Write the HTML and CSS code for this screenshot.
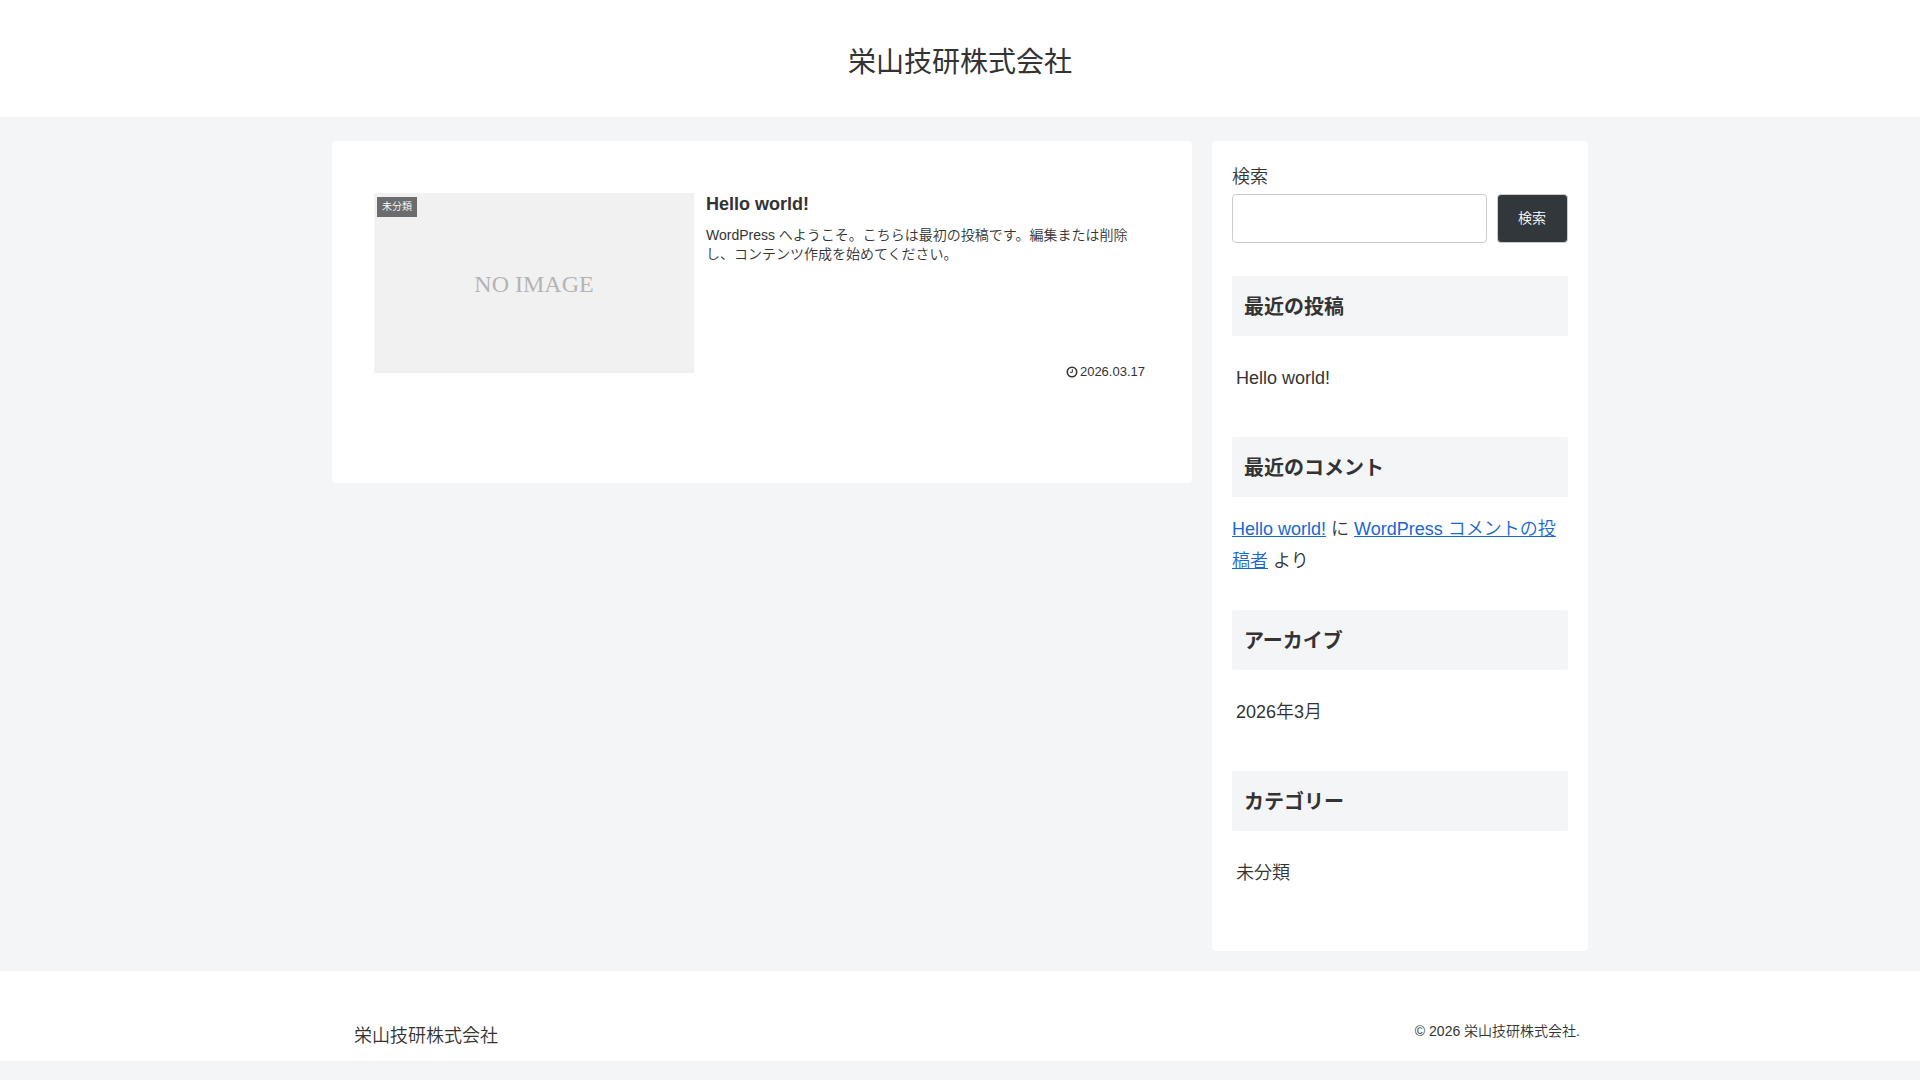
FILE: index.html
```html
<!DOCTYPE html>
<html lang="ja">
<head>
  <meta charset="UTF-8">
  <meta name="viewport" content="width=device-width, initial-scale=1.0">
  <title>栄山技研株式会社</title>
  <link rel="stylesheet" href="styles.css">
</head>
<body>
  <header class="header">
    <h1 class="site-name"><a href="#">栄山技研株式会社</a></h1>
  </header>

  <div class="content">
    <main class="main">
      <article class="entry-card">
        <a class="thumb" href="#">
          <span class="no-image">NO IMAGE</span>
          <span class="cat-label">未分類</span>
        </a>
        <div class="entry-body">
          <h2 class="entry-title"><a href="#">Hello world!</a></h2>
          <p class="entry-snippet">WordPress へようこそ。こちらは最初の投稿です。編集または削除し、コンテンツ作成を始めてください。</p>
          <div class="entry-date">
            <svg class="clock" viewBox="0 0 12 12" aria-hidden="true">
              <circle cx="6" cy="6" r="4.7"></circle>
              <path d="M6.3 3.2v3.2H4"></path>
            </svg>
            <time datetime="2026-03-17">2026.03.17</time>
          </div>
        </div>
      </article>
    </main>

    <aside class="sidebar">
      <form class="widget search" role="search">
        <label for="search-input">検索</label>
        <div class="search-row">
          <input type="search" id="search-input" class="search-input">
          <button type="submit" class="search-button">検索</button>
        </div>
      </form>

      <section class="widget">
        <h2 class="widget-title">最近の投稿</h2>
        <ul class="link-list">
          <li><a href="#">Hello world!</a></li>
        </ul>
      </section>

      <section class="widget">
        <h2 class="widget-title">最近のコメント</h2>
        <p class="comment"><a href="#">Hello world!</a> に <a href="#">WordPress コメントの投稿者</a> より</p>
      </section>

      <section class="widget">
        <h2 class="widget-title">アーカイブ</h2>
        <ul class="link-list">
          <li><a href="#">2026年3月</a></li>
        </ul>
      </section>

      <section class="widget">
        <h2 class="widget-title">カテゴリー</h2>
        <ul class="link-list">
          <li><a href="#">未分類</a></li>
        </ul>
      </section>
    </aside>
  </div>

  <footer class="footer">
    <div class="footer-in">
      <a class="footer-name" href="#">栄山技研株式会社</a>
      <p class="copyright">© 2026 栄山技研株式会社.</p>
    </div>
  </footer>
</body>
</html>
```
FILE: styles.css
```css
* {
  box-sizing: border-box;
}
body {
  margin: 0;
  background-color: #f4f5f7;
  color: #333;
  font-family: "Liberation Sans", Arial, "Noto Sans CJK JP", sans-serif;
  font-size: 18px;
  font-weight: 350;
  line-height: 32px;
}
h1, h2, p, ul {
  margin: 0;
  padding: 0;
}
a {
  color: inherit;
  text-decoration: none;
}

/* header */
.header {
  background-color: #fff;
  padding: 41px 20px 32px;
  text-align: center;
}
.site-name {
  font-size: 28px;
  font-weight: 400;
  line-height: 44px;
}

/* columns */
.content {
  display: flex;
  align-items: flex-start;
  gap: 20px;
  max-width: 1256px;
  margin: 24px auto 20px;
}
.main {
  flex: 1;
  min-width: 0;
  background-color: #fff;
  border-radius: 4px;
  padding: 52px 42px 102px;
}
.sidebar {
  width: 376px;
  background-color: #fff;
  border-radius: 4px;
  padding: 20px 20px 19px;
}

/* entry card */
.entry-card {
  display: flex;
  align-items: flex-start;
  gap: 12px;
}
.thumb {
  position: relative;
  display: flex;
  align-items: center;
  justify-content: center;
  flex: 0 0 320px;
  height: 180px;
  padding-top: 2px;
  background-color: #f1f1f1;
}
.no-image {
  color: #b4b4b4;
  font-family: "Liberation Serif", "Times New Roman", serif;
  font-size: 24px;
}
.cat-label {
  position: absolute;
  top: 4px;
  left: 3px;
  padding: 0 5px;
  background-color: rgba(51, 51, 51, 0.7);
  color: #fff;
  font-size: 10px;
  line-height: 20px;
}
.entry-body {
  display: flex;
  flex: 1;
  flex-direction: column;
  min-height: 188px;
}
.entry-title {
  margin-bottom: 11px;
  font-size: 18px;
  line-height: 22px;
}
.entry-snippet {
  font-size: 14px;
  line-height: 19px;
}
.entry-date {
  display: flex;
  align-items: center;
  justify-content: flex-end;
  gap: 2px;
  margin-top: auto;
  padding-right: 5px;
  font-size: 13px;
  line-height: 18px;
}
.clock {
  width: 12px;
  height: 12px;
  fill: none;
  stroke: #333;
  stroke-width: 1.6;
}
.clock path {
  stroke-width: 1;
}

/* widgets */
.widget {
  margin-bottom: 33px;
}
.widget-title {
  margin-bottom: 16px;
  padding: 15px 12px 13px;
  background-color: #f4f5f7;
  border-radius: 2px;
  font-size: 20px;
  line-height: 32px;
}
.search label {
  display: block;
  margin-bottom: 1px;
}
.search-row {
  display: flex;
  gap: 10px;
}
.search-input {
  flex: 1;
  min-width: 0;
  height: 49px;
  padding: 0 10px;
  border: 1px solid #ccc;
  border-radius: 4px;
  background-color: #fff;
  color: #333;
  font: inherit;
  appearance: none;
}
.search-button {
  padding: 0 21px 3px 20px;
  border: 1px solid #ccc;
  border-radius: 4px;
  background-color: #32373c;
  color: #fff;
  font-family: inherit;
  font-size: 14px;
  font-weight: 350;
  cursor: pointer;
}
.link-list {
  list-style: none;
}
.link-list a {
  display: block;
  padding: 10px 4px;
}
.link-list a:hover {
  background-color: #f5f8fa;
}
.comment a {
  color: #1967d2;
  text-decoration: underline;
}

/* footer */
.footer {
  background-color: #fff;
}
.footer-in {
  display: flex;
  align-items: flex-end;
  justify-content: space-between;
  max-width: 1256px;
  margin: 0 auto;
  padding: 44px 8px 9px 22px;
}
.copyright {
  padding-bottom: 5px;
  font-size: 14px;
}

@media (max-width: 1023px) {
  .content {
    flex-direction: column;
    align-items: stretch;
  }
  .sidebar {
    width: auto;
  }
}
```
